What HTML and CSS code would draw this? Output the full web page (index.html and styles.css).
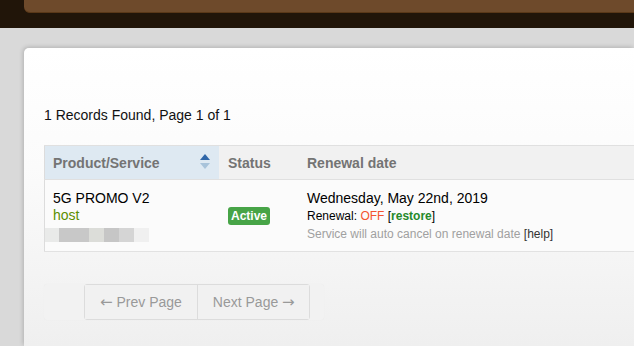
FILE: index.html
```html
<!DOCTYPE html>
<html lang="en">
<head>
    <meta charset="UTF-8">
    <meta name="viewport" content="width=device-width, initial-scale=1.0">
    <title>My Products &amp; Services</title>
    <link rel="stylesheet" href="styles.css">
</head>
<body>

    <!-- Site header strip -->
    <div class="top-band">
        <div class="top-bar"></div>
    </div>

    <div class="page">
        <div class="card">
            <p class="records">1 Records Found, Page 1 of 1</p>

            <table class="services">
                <thead>
                    <tr>
                        <th class="sorted">
                            Product/Service
                            <span class="sort-icon">
                                <svg width="10" height="18" viewBox="0 0 10 18">
                                    <polygon points="5,1 10,7 0,7" fill="#2f66a8"/>
                                    <polygon points="0,10 10,10 5,16" fill="#a8c3da"/>
                                </svg>
                            </span>
                        </th>
                        <th class="col-status">Status</th>
                        <th>Renewal date</th>
                    </tr>
                </thead>
                <tbody>
                    <tr>
                        <td class="product">
                            <div class="product-name">5G PROMO V2</div>
                            <div class="product-group">host</div>
                            <div class="blurred">
                                <span class="px" style="background:#e9eae9"></span>
                                <span class="px" style="background:#c8c8c8"></span>
                                <span class="px" style="background:#c8c8c8"></span>
                                <span class="px" style="background:#dcddd9"></span>
                                <span class="px" style="background:#c6c6c6"></span>
                                <span class="px" style="background:#d5d5d5"></span>
                                <span class="px" style="background:#e9eaea"></span>
                            </div>
                        </td>
                        <td class="col-status status-cell">
                            <span class="badge">Active</span>
                        </td>
                        <td class="renewal">
                            <div class="renew-date">Wednesday, May 22nd, 2019</div>
                            <div class="small">Renewal: <span class="off">OFF</span> [<a class="restore">restore</a>]</div>
                            <div class="small muted">Service will auto cancel on renewal date <span class="help">[help]</span></div>
                        </td>
                    </tr>
                </tbody>
            </table>

            <div class="pager">
                <div class="pager-group">
                    <button class="pager-btn"><span class="arrow">&larr;</span> Prev Page</button>
                    <button class="pager-btn">Next Page <span class="arrow">&rarr;</span></button>
                </div>
            </div>
        </div>
    </div>

</body>
</html>
```

FILE: styles.css
```css
body {
    font-family: Arial, "Liberation Sans", sans-serif;
    font-size: 14px;
    color: #000;
    margin: 0;
    background-color: #d9d9d9;
    overflow: hidden;
}

/* Header */
.top-band {
    height: 28px;
    background-color: #211509;
    padding-left: 24px;
}

.top-bar {
    height: 12px;
    background-color: #6e4a2b;
    border-bottom: 1px solid #5a3818;
    border-bottom-left-radius: 6px;
}

/* Main card */
.page {
    padding: 20px 0 0 24px;
}

.card {
    height: 298px;
    background: linear-gradient(#ffffff, #fbfbfb 40%, #efefef 100%);
    border-top-left-radius: 5px;
    box-shadow: -1px -1px 4px rgba(0, 0, 0, 0.18);
    padding: 59px 0 0 20px;
    box-sizing: border-box;
}

.records {
    margin: 0 0 22px 0;
    line-height: 16px;
    color: #111;
}

/* Table */
.services {
    width: 100%;
    border-collapse: collapse;
    border-left: 1px solid #dcdcdc;
    border-bottom: 1px solid #e2e2e2;
    background-color: #fbfbfb;
}

.services th {
    height: 33px;
    padding: 0 8px;
    text-align: left;
    font-weight: bold;
    color: #747474;
    background-color: #f1f1f1;
    border-top: 1px solid #e0e0e0;
    border-bottom: 1px solid #e0e0e0;
}

.services th.sorted {
    width: 158px;
    background-color: #dee9f2;
    position: relative;
}

.sort-icon {
    position: absolute;
    right: 9px;
    top: 7px;
}

.services .col-status {
    width: 63px;
    padding-left: 9px;
}

.services td {
    vertical-align: top;
    padding: 10px 8px 0 8px;
    height: 61px;
}

.product-name {
    line-height: 17px;
}

.product-group {
    line-height: 17px;
    color: #5b8f00;
}

.blurred {
    display: flex;
    margin: 4px 0 0 -8px;
    height: 14px;
}

.blurred .px {
    width: 15px;
    height: 14px;
}

.blurred .px:first-child {
    width: 14px;
}

.blurred .px:last-child {
    width: 15px;
    opacity: 0.6;
}

.services td.status-cell {
    vertical-align: middle;
    padding-top: 0;
}

.badge {
    display: inline-block;
    background-color: #47a447;
    color: #fff;
    font-size: 12px;
    font-weight: bold;
    padding: 2px 3px;
    line-height: 14px;
    border-radius: 3px;
}

.renew-date {
    line-height: 17px;
}

.small {
    font-size: 12px;
    line-height: 18px;
}

.off {
    color: #f4532e;
}

.restore {
    color: #24892a;
    font-weight: bold;
}

.muted {
    color: #a0a0a0;
}

.help {
    color: #333;
}

/* Pagination */
.pager {
    margin-top: 32px;
    width: 240px;
    padding-left: 40px;
    background-color: #f2f2f2;
    border-radius: 3px;
    box-shadow: 0 0 1px rgba(0, 0, 0, 0.06);
}

.pager-group {
    display: flex;
    border: 1px solid #dcdcdc;
    border-radius: 3px;
    width: fit-content;
}

.pager-btn {
    font-family: Arial, "Liberation Sans", sans-serif;
    font-size: 14px;
    color: #999;
    background-color: #f1f1f1;
    border: none;
    height: 34px;
    padding: 0 15px;
}

.pager-btn + .pager-btn {
    border-left: 1px solid #dcdcdc;
    padding-right: 14px;
}

.pager-btn .arrow {
    font-family: "DejaVu Sans", sans-serif;
    font-size: 15px;
}
```
